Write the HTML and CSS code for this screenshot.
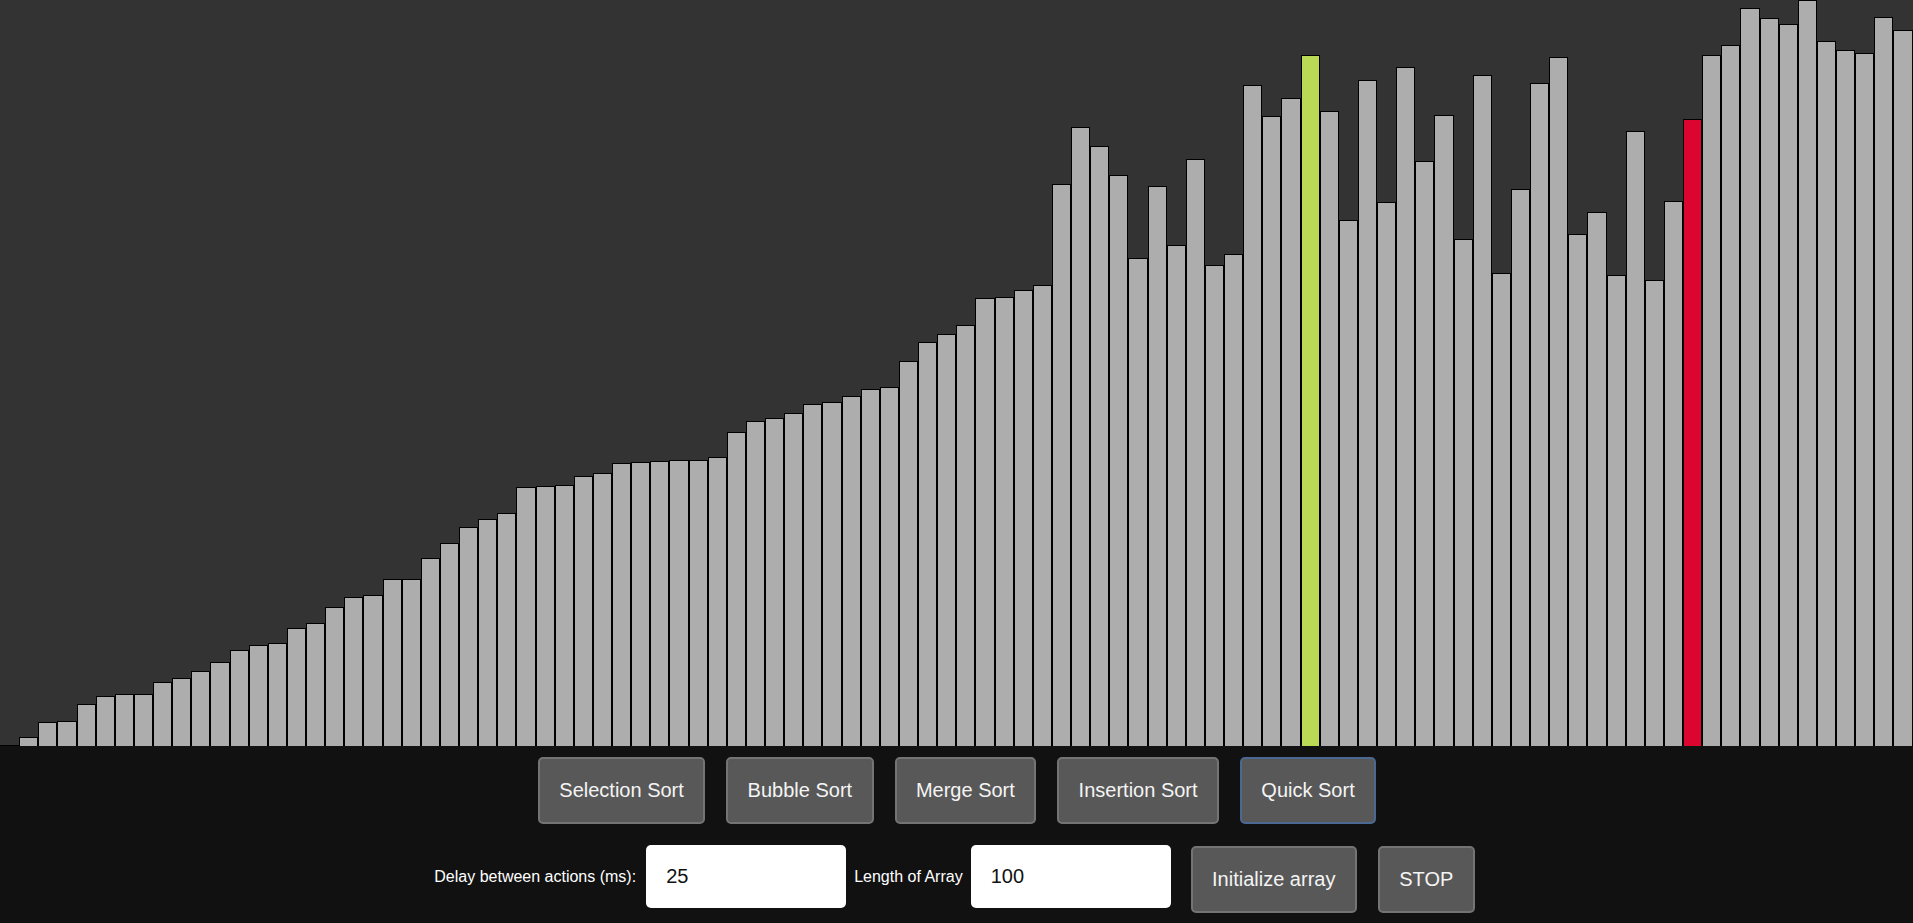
FILE: index.html
```html
<!DOCTYPE html>
<html>
<head>
<meta charset="utf-8">
<title>Sorting Visualizer</title>
<link rel="stylesheet" href="styles.css">
</head>
<body>
<div class="chart">
<div class="bar" style="height:0px"></div>
<div class="bar" style="height:9px"></div>
<div class="bar" style="height:24px"></div>
<div class="bar" style="height:25px"></div>
<div class="bar" style="height:42px"></div>
<div class="bar" style="height:50px"></div>
<div class="bar" style="height:52px"></div>
<div class="bar" style="height:52px"></div>
<div class="bar" style="height:64px"></div>
<div class="bar" style="height:68px"></div>
<div class="bar" style="height:75px"></div>
<div class="bar" style="height:84px"></div>
<div class="bar" style="height:96px"></div>
<div class="bar" style="height:101px"></div>
<div class="bar" style="height:103px"></div>
<div class="bar" style="height:118px"></div>
<div class="bar" style="height:123px"></div>
<div class="bar" style="height:139px"></div>
<div class="bar" style="height:149px"></div>
<div class="bar" style="height:151px"></div>
<div class="bar" style="height:167px"></div>
<div class="bar" style="height:167px"></div>
<div class="bar" style="height:188px"></div>
<div class="bar" style="height:203px"></div>
<div class="bar" style="height:219px"></div>
<div class="bar" style="height:227px"></div>
<div class="bar" style="height:233px"></div>
<div class="bar" style="height:259px"></div>
<div class="bar" style="height:260px"></div>
<div class="bar" style="height:261px"></div>
<div class="bar" style="height:270px"></div>
<div class="bar" style="height:273px"></div>
<div class="bar" style="height:283px"></div>
<div class="bar" style="height:284px"></div>
<div class="bar" style="height:285px"></div>
<div class="bar" style="height:286px"></div>
<div class="bar" style="height:286px"></div>
<div class="bar" style="height:289px"></div>
<div class="bar" style="height:314px"></div>
<div class="bar" style="height:325px"></div>
<div class="bar" style="height:328px"></div>
<div class="bar" style="height:333px"></div>
<div class="bar" style="height:342px"></div>
<div class="bar" style="height:344px"></div>
<div class="bar" style="height:350px"></div>
<div class="bar" style="height:357px"></div>
<div class="bar" style="height:359px"></div>
<div class="bar" style="height:385px"></div>
<div class="bar" style="height:404px"></div>
<div class="bar" style="height:412px"></div>
<div class="bar" style="height:421px"></div>
<div class="bar" style="height:448px"></div>
<div class="bar" style="height:449px"></div>
<div class="bar" style="height:456px"></div>
<div class="bar" style="height:461px"></div>
<div class="bar" style="height:562px"></div>
<div class="bar" style="height:619px"></div>
<div class="bar" style="height:600px"></div>
<div class="bar" style="height:571px"></div>
<div class="bar" style="height:488px"></div>
<div class="bar" style="height:560px"></div>
<div class="bar" style="height:501px"></div>
<div class="bar" style="height:587px"></div>
<div class="bar" style="height:481px"></div>
<div class="bar" style="height:492px"></div>
<div class="bar" style="height:661px"></div>
<div class="bar" style="height:630px"></div>
<div class="bar" style="height:648px"></div>
<div class="bar bar-green" style="height:691px"></div>
<div class="bar" style="height:635px"></div>
<div class="bar" style="height:526px"></div>
<div class="bar" style="height:666px"></div>
<div class="bar" style="height:544px"></div>
<div class="bar" style="height:679px"></div>
<div class="bar" style="height:585px"></div>
<div class="bar" style="height:631px"></div>
<div class="bar" style="height:507px"></div>
<div class="bar" style="height:671px"></div>
<div class="bar" style="height:473px"></div>
<div class="bar" style="height:557px"></div>
<div class="bar" style="height:663px"></div>
<div class="bar" style="height:689px"></div>
<div class="bar" style="height:512px"></div>
<div class="bar" style="height:534px"></div>
<div class="bar" style="height:471px"></div>
<div class="bar" style="height:615px"></div>
<div class="bar" style="height:466px"></div>
<div class="bar" style="height:545px"></div>
<div class="bar bar-red" style="height:627px"></div>
<div class="bar" style="height:691px"></div>
<div class="bar" style="height:701px"></div>
<div class="bar" style="height:738px"></div>
<div class="bar" style="height:728px"></div>
<div class="bar" style="height:722px"></div>
<div class="bar" style="height:746px"></div>
<div class="bar" style="height:705px"></div>
<div class="bar" style="height:696px"></div>
<div class="bar" style="height:693px"></div>
<div class="bar" style="height:729px"></div>
<div class="bar" style="height:716px"></div>
</div>
<div class="controls">
  <div class="row row-algos">
    <button class="btn">Selection Sort</button>
    <button class="btn">Bubble Sort</button>
    <button class="btn">Merge Sort</button>
    <button class="btn">Insertion Sort</button>
    <button class="btn btn-focus">Quick Sort</button>
  </div>
  <div class="row row-settings">
    <label class="lbl lbl-delay">Delay between actions (ms):</label>
    <input class="field field-delay" type="text" value="25">
    <label class="lbl lbl-length">Length of Array</label>
    <input class="field field-length" type="text" value="100">
    <button class="btn btn-init">Initialize array</button>
    <button class="btn">STOP</button>
  </div>
</div>
</body>
</html>
```

FILE: styles.css
```css
* { box-sizing: border-box; }
html, body {
  margin: 0;
  padding: 0;
  height: 100%;
  overflow: hidden;
  font-family: "Liberation Sans", Arial, sans-serif;
}
body {
  background: #111111;
  display: flex;
  flex-direction: column;
}
.chart {
  height: 746px;
  flex: none;
  background: #333333;
  display: flex;
  align-items: flex-end;
}
.bar {
  flex: 1 1 0;
  min-width: 0;
  background: #adadad;
  border: 1px solid #000;
  border-bottom: none;
}
.bar-green { background: #bada55; }
.bar-red { background: #dc0530; }

.controls {
  flex: 1;
  background: #111111;
  padding-top: 11px;
}
.row {
  display: flex;
  justify-content: center;
}
.row-algos {
  gap: 21px;
  padding-left: 1px;
}
.row-settings {
  margin-top: 21px;
  align-items: flex-start;
  padding-right: 4px;
}
.btn {
  font-family: "Liberation Sans", Arial, sans-serif;
  font-size: 20px;
  line-height: 23px;
  color: #f4f4f4;
  background: #585858;
  border: 2px solid #747474;
  border-radius: 5px;
  padding: 20px 19.4px;
  margin: 0;
}
.btn-focus { border-color: #4b6892; }
.row-settings .btn { margin-top: 1px; }
.btn-init { margin-left: 20px; margin-right: 21px; }
.lbl {
  color: #ffffff;
  font-size: 16px;
  line-height: 63px;
  height: 63px;
  white-space: nowrap;
}
.lbl-delay { margin-right: 10px; }
.lbl-length { margin-right: 8px; }
.field {
  width: 200px;
  height: 63px;
  background: #ffffff;
  border: none;
  border-radius: 5px;
  padding: 0 20px;
  font-family: "Liberation Sans", Arial, sans-serif;
  font-size: 20px;
  color: #111;
  outline: none;
  margin: 0;
}
.field-delay { margin-right: 8px; }
```
